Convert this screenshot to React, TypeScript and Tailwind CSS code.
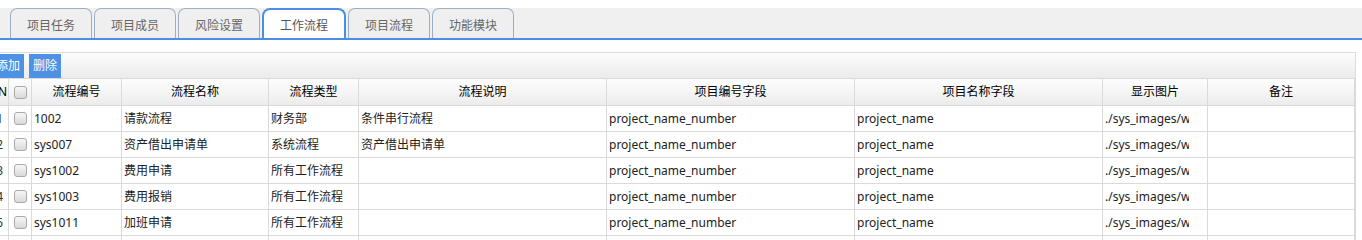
import React from 'react';

type Row = {
  code: string;
  name: string;
  type: string;
  desc: string;
};

const tabs = ['项目任务', '项目成员', '风险设置', '工作流程', '项目流程', '功能模块'];
const activeTab = '工作流程';

const rows: Row[] = [
  { code: '1002', name: '请款流程', type: '财务部', desc: '条件串行流程' },
  { code: 'sys007', name: '资产借出申请单', type: '系统流程', desc: '资产借出申请单' },
  { code: 'sys1002', name: '费用申请', type: '所有工作流程', desc: '' },
  { code: 'sys1003', name: '费用报销', type: '所有工作流程', desc: '' },
  { code: 'sys1011', name: '加班申请', type: '所有工作流程', desc: '' },
];

function CheckBox() {
  return (
    <span className="block w-[13px] h-[13px] rounded-[3px] border border-[#a9a9a9] bg-gradient-to-b from-[#f7f7f7] to-[#d9d9d9]" />
  );
}

const cell = 'flex items-center shrink-0 h-full border-r border-[#dadada] overflow-hidden whitespace-nowrap';

export default function App() {
  return (
    <div className="w-[1362px] h-[240px] overflow-hidden bg-white text-[12px] font-['Noto_Sans','Noto_Sans_CJK_SC',sans-serif]">
      {/* tabs */}
      <div className="pt-[8px]">
        <div className="flex gap-[2px] pl-[10px] h-[32px] bg-[#f0f0f0] border-b-2 border-[#4a90e2]">
          {tabs.map((t) =>
            t === activeTab ? (
              <div
                key={t}
                className="w-[84px] h-[30px] pt-[4px] flex items-center justify-center rounded-t-[8px] border-2 border-b-0 border-[#4a90e2] bg-white text-[#555]"
              >
                {t}
              </div>
            ) : (
              <div
                key={t}
                className="w-[82px] h-[30px] pt-[4px] flex items-center justify-center rounded-t-[7px] border border-b-0 border-[#9cafc7] bg-[#efefef] text-[#666]"
              >
                {t}
              </div>
            )
          )}
        </div>
      </div>

      {/* toolbar + grid */}
      <div className="mt-[12px] -ml-[12px] w-[1368px]">
        <div className="flex items-center gap-[5px] h-[26px] pt-[1px] border border-b-0 border-[#dcdcdc] bg-gradient-to-b from-[#fdfdfd] to-[#ebebeb]">
          <button className="h-[24px] px-[4px] ml-[3px] bg-[#4d92e4] text-white">添加</button>
          <button className="h-[24px] px-[4px] bg-[#4d92e4] text-white">删除</button>
        </div>

        <div className="flex h-[28px] border border-[#dadada] bg-gradient-to-b from-[#fefefe] to-[#ececec] text-black">
          <div className={`${cell} w-[20px] justify-end pr-[1px]`}>N</div>
          <div className={`${cell} w-[23px] justify-center`}>
            <CheckBox />
          </div>
          <div className={`${cell} w-[90px] justify-center`}>流程编号</div>
          <div className={`${cell} w-[147px] justify-center`}>流程名称</div>
          <div className={`${cell} w-[90px] justify-center`}>流程类型</div>
          <div className={`${cell} w-[248px] justify-center`}>流程说明</div>
          <div className={`${cell} w-[248px] justify-center`}>项目编号字段</div>
          <div className={`${cell} w-[248px] justify-center`}>项目名称字段</div>
          <div className={`${cell} w-[105px] justify-center`}>显示图片</div>
          <div className={`${cell} w-[147px] justify-center`}>备注</div>
        </div>

        {[...rows, null].map((r, i) => (
          <div key={i} className="flex h-[26px] border-x border-b border-[#dadada] text-[#222]">
            <div className={`${cell} w-[20px] justify-end pr-[5px] text-[#333]`}>{r ? i + 1 : ''}</div>
            <div className={`${cell} w-[23px] justify-center`}>{r && <CheckBox />}</div>
            <div className={`${cell} w-[90px] px-[2px]`}>{r?.code}</div>
            <div className={`${cell} w-[147px] px-[2px]`}>{r?.name}</div>
            <div className={`${cell} w-[90px] px-[2px]`}>{r?.type}</div>
            <div className={`${cell} w-[248px] px-[2px]`}>{r?.desc}</div>
            <div className={`${cell} w-[248px] px-[2px]`}>{r && 'project_name_number'}</div>
            <div className={`${cell} w-[248px] px-[2px]`}>{r && 'project_name'}</div>
            <div className={`${cell} w-[105px] px-[2px]`}>
              {r && <div className="w-[84px] overflow-hidden">./sys_images/workflow.png</div>}
            </div>
            <div className={`${cell} w-[147px] px-[2px]`} />
          </div>
        ))}
      </div>
    </div>
  );
}
